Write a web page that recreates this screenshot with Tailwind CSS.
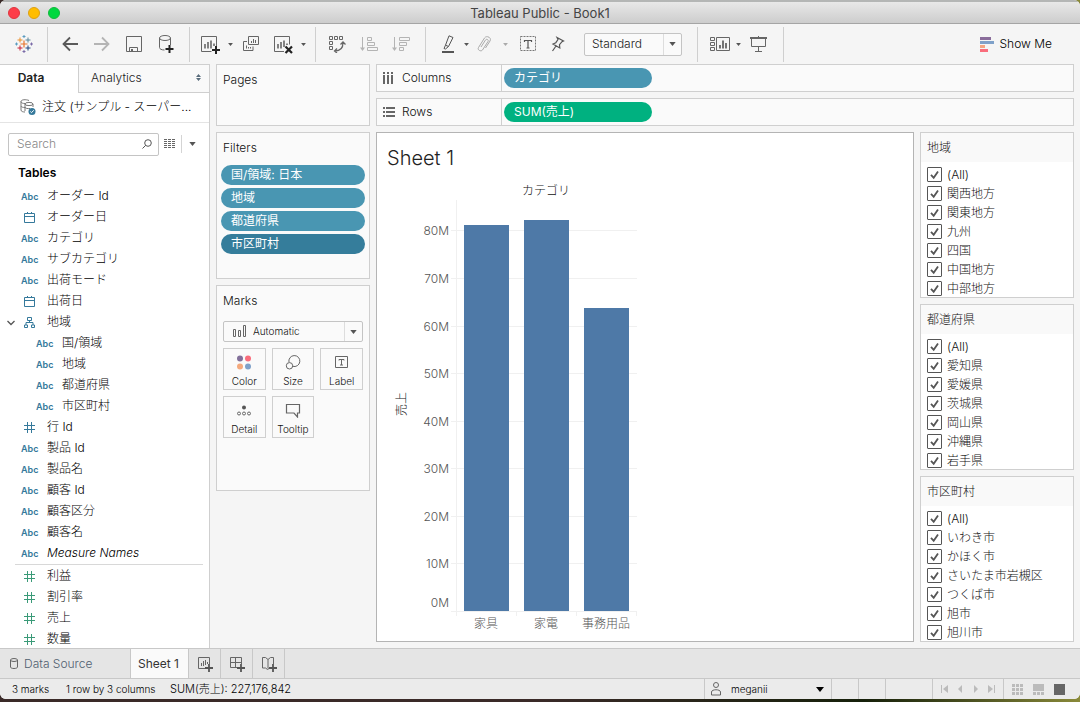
<!DOCTYPE html>
<html lang="ja">
<head>
<meta charset="utf-8">
<title>Tableau Public - Book1</title>
<script src="https://cdn.jsdelivr.net/npm/@tailwindcss/browser@4"></script>
</head>
<body class="h-screen overflow-hidden bg-[#3a2a28] font-['Inter','Noto_Sans_CJK_JP',sans-serif] text-xs font-light text-black">
<svg class="hidden">
  <symbol id="caret" viewBox="0 0 8 5"><path d="M0 0h8L4 5z" fill="currentColor"/></symbol>
  <symbol id="cal" viewBox="0 0 11 11"><path d="M.5 1.500h10v9H.5zM.5 4.500h10M3.500 0v2M7.500 0v2" fill="none" stroke="currentColor"/></symbol>
  <symbol id="hash" viewBox="0 0 11 11"><path d="M3.500 0v11M7.500 0v11M0 3.500h11M0 7.500h11" fill="none" stroke="currentColor"/></symbol>
  <symbol id="tree" viewBox="0 0 11 11"><path d="M3.500.5h4v3h-4zM.5 8h3v2.500h-3zM7.500 8h3v2.500h-3zM5.500 3.500v2M2 8V5.500h7V8" fill="none" stroke="currentColor"/></symbol>
  <symbol id="tick" viewBox="0 0 15 15"><path d="M4 7.800l2.700 3L11 4.500" fill="none" stroke="#555" stroke-width="1.800"/></symbol>
</svg>
<div class="flex h-screen flex-col bg-linear-to-r from-[#3a2a28] from-50% via-[#16200a] via-80% to-[#8a8a3a]">
<div class="mb-[3px] flex min-h-0 flex-1 flex-col overflow-hidden rounded-md bg-[#f5f5f5]">

<header class="flex h-6 shrink-0 items-center border-t-2 border-b border-t-[#b4b6b5] border-b-[#a5a5a5] bg-linear-to-b from-[#e8e8e8] to-[#cdcdcd] px-2">
  <div class="flex flex-1 gap-2">
    <button aria-label="Close" class="size-3 rounded-full border border-[#e0353f] bg-[#fd3d49]"></button>
    <button aria-label="Minimize" class="size-3 rounded-full border border-[#dea012] bg-[#ffbd00]"></button>
    <button aria-label="Zoom" class="size-3 rounded-full border border-[#12b93d] bg-[#00d840]"></button>
  </div>
  <h1 class="text-[13px] leading-5 font-normal text-[#444]">Tableau Public - Book1</h1>
  <div class="flex-1"></div>
</header>

<div class="flex h-10 shrink-0 items-center text-[#555] [&_button]:flex [&_button]:h-8 [&_button]:items-center [&_button]:justify-center [&>div]:flex [&>div]:h-[35px] [&>div]:items-center [&>div]:border-[#cfcfcf]">
  <div class="w-[47px] justify-center">
    <button aria-label="Start page"><svg class="size-[18px]" viewBox="0 0 18 18" fill="none"><path d="M9 5.500v7M5.500 9h7" stroke="#e8762c" stroke-width="1.200"/><path d="M5 2.500v5M2.500 5h5" stroke="#eb912c"/><path d="M13 2.500v5M10.500 5h5" stroke="#5b879b"/><path d="M5 10.500v5M2.500 13h5" stroke="#c72037"/><path d="M13 10.500v5M10.500 13h5" stroke="#1f447e"/><path d="M9 0v3M7.500 1.500h3M1.500 7.500v3M0 9h3" stroke="#5b9bbf"/><path d="M16.500 7.500v3M15 9h3M9 15v3M7.500 16.500h3" stroke="#7a6ba8"/></svg></button>
  </div>
  <div class="w-[142px] border-l pl-1.5 [&>button]:w-8">
    <button aria-label="Undo"><svg class="size-4" viewBox="0 0 16 16" fill="none" stroke="#5a5a5a" stroke-width="1.800"><path d="M16 8H1.500M8 1.500L1.500 8 8 14.500"/></svg></button>
    <button aria-label="Redo"><svg class="size-4" viewBox="0 0 16 16" fill="none" stroke="#b4b4b4" stroke-width="1.800"><path d="M0 8h14.500M8 1.500L14.500 8 8 14.500"/></svg></button>
    <button aria-label="Save"><svg class="size-4" viewBox="0 0 16 16" fill="none" stroke="#666"><path d="M.5.5h15v15H.5zM3.500 15.500v-4h8v4"/><path d="M5 13h2v3H5z" fill="#666" stroke="none"/></svg></button>
    <button aria-label="New data source"><svg class="h-[19px] w-4" viewBox="0 0 16 19" fill="none" stroke="#666"><ellipse cx="7" cy="3" rx="5.500" ry="2.500"/><path d="M1.500 3v9.500c0 1.500 2 2.500 5 2.500M12.500 3v7"/><path d="M11.500 10v8M7.500 14h8" stroke="#222" stroke-width="2"/></svg></button>
  </div>
  <div class="w-[126px] border-l pl-1">
    <button aria-label="New worksheet" class="w-8"><svg class="h-[19px] w-5" viewBox="0 0 20 19" fill="none" stroke="#666"><path d="M11.500 16.500H1.500v-15h15v10"/><path d="M5 13.500V9M8 13.500V7M11 13.500V5.500M14 11V8.500" stroke-width="1.600"/><path d="M16 11v8M12 15h8" stroke="#222" stroke-width="2"/></svg></button>
    <button aria-label="New menu" class="w-[9px]"><svg class="h-[3px] w-[5px]"><use href="#caret"/></svg></button>
    <button aria-label="Duplicate" class="w-8"><svg class="h-[18px] w-[18px]" viewBox="0 0 18 18" fill="none" stroke="#666"><path d="M6.500 1.500h10v8h-10zM5 6.500H1.500v9h9.500v-4"/><path d="M9.500 8V6M11.500 8V4M13.500 8V5M4.500 13.500v-3M6.500 13.500V12M8.500 13.500V12"/></svg></button>
    <button aria-label="Clear sheet" class="w-8"><svg class="h-[19px] w-5" viewBox="0 0 20 19" fill="none" stroke="#666"><path d="M11 16.500H1.500v-15h15v8"/><path d="M5 13.500V9M8 13.500V7M11 12V5.500M14 10V8.500" stroke-width="1.600"/><path d="M12.500 11.500l6.500 6.500M19 11.500L12.500 18" stroke="#222" stroke-width="2.200"/></svg></button>
    <button aria-label="Clear menu" class="w-[9px]"><svg class="h-[3px] w-[5px]"><use href="#caret"/></svg></button>
  </div>
  <div class="w-[110px] border-l pl-[5px] [&>button]:w-8">
    <button aria-label="Swap rows and columns"><svg class="h-[18px] w-[18px]" viewBox="0 0 18 18" fill="none" stroke="#666"><path d="M1.500 1.500h3v3h-3zM6.500 1.500h3v3h-3zM11.500 1.500h3v3h-3zM1.500 6.500h3v3h-3zM1.500 11.500h3v3h-3z"/><path d="M7 16c5 0 8-3 8-8.500M12.500 9.500L15 7l2.500 2.500M9 13.500L6.500 16 9 18" stroke-width="1.300"/></svg></button>
    <button aria-label="Sort ascending"><svg class="h-4 w-[18px]" viewBox="0 0 18 16" fill="none" stroke="#b4b4b4"><path d="M2.500 1v12M7.500 1.500h4v3h-4zM7.500 6.500h7v3h-7zM7.500 11.500h10v3h-10z"/><path d="M0 11.500h5l-2.500 3.500z" fill="#b4b4b4" stroke="none"/></svg></button>
    <button aria-label="Sort descending"><svg class="h-4 w-[18px]" viewBox="0 0 18 16" fill="none" stroke="#b4b4b4"><path d="M2.500 1v12M7.500 1.500h10v3h-10zM7.500 6.500h7v3h-7zM7.500 11.500h4v3h-4z"/><path d="M0 11.500h5l-2.500 3.500z" fill="#b4b4b4" stroke="none"/></svg></button>
  </div>
  <div class="w-[272px] border-l pl-2">
    <button aria-label="Highlight" class="w-7"><svg class="h-[18px] w-3" viewBox="0 0 12 18" fill="none" stroke="#555"><path d="M7 .8l4 1.700-4.500 9-3-1.300zM3.500 10.200L2 13.500l1.500.5 3-2.500"/><path d="M0 17h12" stroke-width="2"/></svg></button>
    <button aria-label="Highlight menu" class="w-2"><svg class="h-[3px] w-[5px]"><use href="#caret"/></svg></button>
    <button aria-label="Group members" class="w-7"><svg class="h-4 w-3.5" viewBox="0 0 14 16" fill="none" stroke="#aaa"><path d="M4 11l4.500-7c1-1.500 3.500-.3 2.500 1.500L5.500 14c-1.500 2-5.500 0-4-2.500L7.500 2c2-3 7.500-.5 5.500 3L8.500 12"/></svg></button>
    <button aria-label="Group menu" class="w-3.5 text-[#aaa]"><svg class="h-[3px] w-[5px]"><use href="#caret"/></svg></button>
    <button aria-label="Show mark labels" class="w-8"><svg class="h-4 w-[18px]" viewBox="0 0 18 16" fill="none" stroke="#777"><path d="M1.500.5h15v14h-15z" stroke-dasharray="2 1"/><path d="M5.500 6V4.500h7V6M9 4.500v7.500M7.500 12h3" stroke="#555" stroke-width="1.200"/></svg></button>
    <button aria-label="Fix axes" class="w-7"><svg class="h-4 w-3.5" viewBox="0 0 14 16" fill="none" stroke="#555" stroke-width="1.200"><path d="M6 1.500l6.500 3.500-1.500.7-2.500 3 .3 3.300L2 8l2.800-1.300L7 3.500zM5 10l-3.500 5"/></svg></button>
    <div class="relative ml-3 h-[23px] w-[98px]">
      <select aria-label="Fit" class="size-full appearance-none rounded-[2px] border border-[#c4c4c4] bg-[#fafafa] pl-[7px] text-[#222]"><option>Standard</option></select>
      <span class="pointer-events-none absolute inset-y-px right-px flex w-[18px] items-center justify-center border-l border-[#ddd]"><svg class="h-1 w-[7px]"><use href="#caret"/></svg></span>
    </div>
  </div>
  <div class="w-[87px] border-x pl-2">
    <button aria-label="Show cards" class="w-7"><svg class="h-4 w-[21px] shrink-0" viewBox="0 0 21 16" fill="none" stroke="#666"><path d="M.5 1.500h4v3h-4zM.5 6.500h4v3h-4zM.5 11.500h4v3h-4zM6.500 1.500h13v13h-13z"/><path d="M10 12.500V9M13 12.500V4.500M16 12.500V7" stroke-width="1.800"/></svg></button>
    <button aria-label="Card menu" class="w-2"><svg class="h-[3px] w-[5px]"><use href="#caret"/></svg></button>
    <button aria-label="Presentation mode" class="w-[33px]"><svg class="h-[17px] w-[17px]" viewBox="0 0 17 17" fill="none" stroke="#666"><path d="M0 2h17" stroke-width="2"/><path d="M1.500 2v8.500h14V2M8.500 0v2M8.500 11v4.500M5 15.500h7"/></svg></button>
  </div>
  <div class="ml-auto pr-7">
    <button class="gap-1.5 text-black"><svg class="h-[15px] w-3.5" viewBox="0 0 14 15"><path fill="#8a6d9b" d="M0 0h11v3H0z"/><path fill="#7fa1c9" d="M0 4h14v3H0z"/><path fill="#f4a582" d="M0 8h5v3H0z"/><path fill="#f96d7c" d="M0 12h8v3H0z"/></svg>Show Me</button>
  </div>
</div>

<main class="flex min-h-0 flex-1">
  <aside class="flex w-[210px] shrink-0 flex-col overflow-hidden border-t border-r border-[#cfcfcf] bg-white">
    <div class="flex h-7 shrink-0 text-[#222]">
      <button class="w-[78px] pr-4 pb-0.5 font-semibold">Data</button>
      <button class="flex flex-1 items-center justify-between border-b border-l border-[#cfcfcf] bg-[#f9f9f9] pr-2 pb-0.5 pl-3">Analytics
        <svg class="h-[7px] w-[5px]" viewBox="0 0 5 7" fill="#5a6d7c"><path d="M0 3l2.500-3L5 3zM0 4h5L2.500 7z"/></svg></button>
    </div>
    <button class="flex h-[30px] shrink-0 items-center gap-1.5 border-b border-[#e4e4e4] pb-0.5 pl-5 text-black">
      <svg class="h-4 w-4" viewBox="0 0 16 16" fill="none" stroke="#777"><path d="M9 1.500C6 .2 1 .5 1 2.500v8.500c0 1.500 2 2 4 2M1 2.500C1 4 3 4.500 5 4.500M1 7c0 1 2 1.500 4 1.500"/><ellipse cx="9" cy="5" rx="4" ry="1.600"/><path d="M5 5v7M13 5v3M5 8c0 1.500 3 1.800 5 1.500"/><circle cx="12" cy="12.500" r="3.500" fill="#35799b" stroke="none"/><path d="M10.300 12.500l1.200 1.200 2.200-2.400" stroke="#fff"/></svg>
      注文 (サンプル - スーパー...</button>
    <div class="flex h-[42px] shrink-0 items-center pl-2">
      <label class="flex h-[23px] w-[151px] items-center rounded-[2px] border border-[#c4c4c4] pr-1.5 pl-2">
        <input type="search" placeholder="Search" aria-label="Search" class="w-0 flex-1 outline-none placeholder:text-[#888]">
        <svg class="size-2.5" viewBox="0 0 10 10" fill="none" stroke="#555"><circle cx="6" cy="4" r="3.300"/><path d="M3.700 6.300L.5 9.500"/></svg>
      </label>
      <button aria-label="View data" class="ml-[5px]"><svg class="h-2.5 w-3" viewBox="0 0 12 10" stroke="#666"><path d="M0 .5h12M0 2.500h12M0 4.500h12M0 6.500h12M0 8.500h12" stroke-dasharray="3 1"/></svg></button>
      <button aria-label="Options" class="ml-[5px] flex h-[18px] w-[15px] items-center justify-end border-l border-[#d4d4d4] text-[#555]"><svg class="h-1 w-[7px]"><use href="#caret"/></svg></button>
    </div>
    <h2 class="h-[21px] shrink-0 pl-[18px] leading-[15px] font-semibold">Tables</h2>
    <div class="[&_li]:flex [&_li]:h-[21px] [&_li]:items-center [&_b]:w-[26px] [&_b]:text-[9px] [&_b]:font-semibold [&_b]:text-[#35799b] [&_svg]:mr-3 [&_svg]:ml-[3px] [&_svg]:size-[11px] [&_svg]:shrink-0">
    <ul class="pl-[21px] text-[#35799b] [&_span]:-mt-0.5 [&_span]:text-black">
      <li><b>Abc</b><span>オーダー Id</span></li>
      <li><svg><use href="#cal"/></svg><span>オーダー日</span></li>
      <li><b>Abc</b><span>カテゴリ</span></li>
      <li><b>Abc</b><span>サブカテゴリ</span></li>
      <li><b>Abc</b><span>出荷モード</span></li>
      <li><svg><use href="#cal"/></svg><span>出荷日</span></li>
      <li class="-ml-4"><button aria-label="Collapse" class="w-4"><svg viewBox="0 0 11 11" class="!ml-0" fill="none" stroke="#555" stroke-width="1.300"><path d="M2.500 4l3.500 3.500L9.500 4"/></svg></button><svg><use href="#tree"/></svg><span>地域</span></li>
      <li class="ml-[15px]"><b>Abc</b><span>国/領域</span></li>
      <li class="ml-[15px]"><b>Abc</b><span>地域</span></li>
      <li class="ml-[15px]"><b>Abc</b><span>都道府県</span></li>
      <li class="ml-[15px]"><b>Abc</b><span>市区町村</span></li>
      <li><svg><use href="#hash"/></svg><span>行 Id</span></li>
      <li><b>Abc</b><span>製品 Id</span></li>
      <li><b>Abc</b><span>製品名</span></li>
      <li><b>Abc</b><span>顧客 Id</span></li>
      <li><b>Abc</b><span>顧客区分</span></li>
      <li><b>Abc</b><span>顧客名</span></li>
      <li><b>Abc</b><span class="italic">Measure Names</span></li>
    </ul>
    <hr class="mr-1.5 mb-px ml-[15px] border-[#d8d8d8]">
    <ul class="pl-[21px] text-[#3a9a78] [&_span]:-mt-0.5 [&_span]:text-black">
      <li><svg><use href="#hash"/></svg><span>利益</span></li>
      <li><svg><use href="#hash"/></svg><span>割引率</span></li>
      <li><svg><use href="#hash"/></svg><span>売上</span></li>
      <li><svg><use href="#hash"/></svg><span>数量</span></li>
    </ul>
    </div>
  </aside>

  <section class="ml-1.5 flex w-[154px] shrink-0 flex-col gap-1.5 text-[#111] [&>div]:border [&>div]:border-[#cfcfcf] [&>div]:bg-[#fafafa] [&_h2]:pl-1.5 [&_h2]:leading-[30px]">
    <div class="h-[62px]"><h2>Pages</h2></div>
    <div class="h-[147px]"><h2>Filters</h2>
      <ul class="mt-0.5 flex flex-col gap-[3px] px-1 [&>li]:h-5 [&>li]:rounded-full [&>li]:bg-[#4996b2] [&>li]:pl-2.5 [&>li]:leading-5 [&>li]:font-normal [&>li]:text-white">
        <li>国/領域: 日本</li><li>地域</li><li>都道府県</li><li class="!bg-[#357d9b]">市区町村</li>
      </ul>
    </div>
    <div class="h-[206px] pr-1.5"><h2>Marks</h2>
      <div class="relative mt-[5px] ml-1.5 h-[21px]">
        <select aria-label="Mark type" class="size-full appearance-none rounded-[2px] border border-[#c4c4c4] pl-[29px] text-[10px]"><option>Automatic</option></select>
        <svg class="pointer-events-none absolute top-1 left-2.5 h-3 w-[14px]" viewBox="0 0 14 12" fill="none" stroke="#666"><path d="M.5 4.500h2v7h-2zM5.500 5.500h2v6h-2zM10.500.5h2v11h-2z"/></svg>
        <span class="pointer-events-none absolute inset-y-px right-px flex w-[18px] items-center justify-center border-l border-[#ddd] text-[#555]"><svg class="h-1 w-[7px]"><use href="#caret"/></svg></span>
      </div>
      <div class="mt-1.5 ml-1.5 grid grid-cols-3 gap-1.5 [&>button]:flex [&>button]:h-[42px] [&>button]:flex-col [&>button]:items-center [&>button]:justify-between [&>button]:border [&>button]:border-[#cfcfcf] [&>button]:pt-1.5 [&>button]:text-[10px] [&>button]:leading-4 [&_svg]:h-[15px] [&_svg]:w-4">
        <button><svg viewBox="0 0 16 15"><circle cx="4" cy="3.500" r="3" fill="#82709a"/><circle cx="12" cy="3.500" r="3" fill="#f96d7c"/><circle cx="4" cy="11.500" r="3" fill="#f4a97d"/><circle cx="12" cy="11.500" r="3" fill="#7fa1c9"/></svg>Color</button>
        <button><svg viewBox="0 0 16 15" fill="none" stroke="#666"><path d="M4 7.300a5.500 5.500 0 1 1 3.700 4"/><circle cx="4.500" cy="10.800" r="3.200"/></svg>Size</button>
        <button><svg viewBox="0 0 16 15" fill="none" stroke="#666"><path d="M1.500 1.500h12v11h-12z"/><path d="M5 5.500v-1h5v1M7.500 4.500V10M6 10h3"/></svg>Label</button>
        <button><svg viewBox="0 0 16 15" fill="none" stroke="#666"><circle cx="8" cy="4.500" r="2" fill="#555" stroke="none"/><circle cx="3" cy="10.500" r="1.500"/><circle cx="8" cy="10.500" r="1.500"/><circle cx="13" cy="10.500" r="1.500"/></svg>Detail</button>
        <button><svg viewBox="0 0 16 15" fill="none" stroke="#666" stroke-width="1.200"><path d="M1.500 1.500h13v8.500h-2v4L9 10H1.500z"/></svg>Tooltip</button>
      </div>
    </div>
  </section>

  <section class="mr-1.5 mb-1.5 ml-1.5 flex min-w-0 flex-1 flex-col gap-1.5 text-[#111]">
    <div class="flex h-7 shrink-0 border border-[#cfcfcf] bg-[#fafafa]">
      <div class="flex w-[125px] items-center gap-2 border-r border-[#cfcfcf] pl-1.5"><svg class="h-3 w-[11px]" viewBox="0 0 11 12" stroke="#666" stroke-width="2"><path d="M1 0v2M5 0v2M9 0v2M1 3v9M5 3v9M9 3v9"/></svg>Columns</div>
      <div class="m-0.5 mt-[3px] h-5 w-[148px] rounded-full bg-[#4996b2] pl-2.5 leading-[19px] font-normal text-white">カテゴリ</div>
    </div>
    <div class="flex h-7 shrink-0 border border-[#cfcfcf] bg-[#fafafa]">
      <div class="flex w-[125px] items-center gap-[7px] border-r border-[#cfcfcf] pl-1.5"><svg class="h-2.5 w-3" viewBox="0 0 12 10" stroke="#666" stroke-width="2"><path d="M0 1h2M0 5h2M0 9h2M3 1h9M3 5h9M3 9h9"/></svg>Rows</div>
      <div class="m-0.5 mt-[3px] h-5 w-[148px] rounded-full bg-[#00b180] pl-2.5 leading-[19px] font-normal text-white">SUM(売上)</div>
    </div>

    <div class="flex min-h-0 flex-1 gap-1.5">
      <div class="min-w-0 flex-1 overflow-hidden border border-[#b4b4b4] bg-white">
        <h2 class="mt-2 ml-2.5 h-8 text-xl leading-[34px] text-[#222]">Sheet 1</h2>
        <svg class="h-[468px] w-[270px]" viewBox="0 0 270 468" font-size="12" fill="#555" role="img" aria-label="カテゴリ別の売上">
          <text x="169" y="22" text-anchor="middle" fill="#111">カテゴリ</text>
          <path d="M79.500 27v416M74 57.500h186M74 105.500h186M74 153.500h186M74 200.500h186M74 248.500h186M74 295.500h186M74 343.500h186M74 390.500h186M74 438.500h186M139.500 438v5M199.500 438v5M259.500 438v5" stroke="#f0f0f0"/>
          <g fill="#4e79a7"><path d="M87 52h45v386H87z"/><path d="M147 47h45v391h-45z"/><path d="M207 135h45v303h-45z"/></g>
          <g text-anchor="end"><text x="72" y="62">80M</text><text x="72" y="110">70M</text><text x="72" y="158">60M</text><text x="72" y="205">50M</text><text x="72" y="253">40M</text><text x="72" y="300">30M</text><text x="72" y="348">20M</text><text x="72" y="395">10M</text><text x="72" y="434">0M</text></g>
          <g text-anchor="middle"><text x="109" y="455">家具</text><text x="169" y="455">家電</text><text x="229" y="455">事務用品</text></g>
          <text transform="translate(29 231) rotate(-90)" text-anchor="middle" fill="#111">売上</text>
        </svg>
      </div>

      <div class="flex w-[154px] shrink-0 flex-col gap-1.5 [&>fieldset]:min-h-0 [&>fieldset]:flex-1 [&>fieldset]:overflow-hidden [&>fieldset]:border [&>fieldset]:border-[#cfcfcf] [&>fieldset]:bg-white [&_h3]:mb-[3px] [&_h3]:h-[29px] [&_h3]:bg-[#f9f9f9] [&_h3]:pl-1.5 [&_h3]:leading-[30px] [&_label]:flex [&_label]:h-[19px] [&_label]:items-center [&_label]:gap-[5px] [&_label]:pl-1.5 [&_label>span]:grid [&_label>span>*]:col-start-1 [&_label>span>*]:row-start-1 [&_label>span>*]:size-[15px] [&_input]:appearance-none [&_input]:rounded-[1px] [&_input]:border [&_input]:border-[#555] [&_svg]:pointer-events-none [&_svg]:invisible [&_input:checked+svg]:visible">
        <fieldset aria-label="地域"><h3>地域</h3>
          <label><span><input type="checkbox" checked><svg><use href="#tick"/></svg></span>(All)</label>
          <label><span><input type="checkbox" checked><svg><use href="#tick"/></svg></span>関西地方</label>
          <label><span><input type="checkbox" checked><svg><use href="#tick"/></svg></span>関東地方</label>
          <label><span><input type="checkbox" checked><svg><use href="#tick"/></svg></span>九州</label>
          <label><span><input type="checkbox" checked><svg><use href="#tick"/></svg></span>四国</label>
          <label><span><input type="checkbox" checked><svg><use href="#tick"/></svg></span>中国地方</label>
          <label><span><input type="checkbox" checked><svg><use href="#tick"/></svg></span>中部地方</label>
        </fieldset>
        <fieldset aria-label="都道府県"><h3>都道府県</h3>
          <label><span><input type="checkbox" checked><svg><use href="#tick"/></svg></span>(All)</label>
          <label><span><input type="checkbox" checked><svg><use href="#tick"/></svg></span>愛知県</label>
          <label><span><input type="checkbox" checked><svg><use href="#tick"/></svg></span>愛媛県</label>
          <label><span><input type="checkbox" checked><svg><use href="#tick"/></svg></span>茨城県</label>
          <label><span><input type="checkbox" checked><svg><use href="#tick"/></svg></span>岡山県</label>
          <label><span><input type="checkbox" checked><svg><use href="#tick"/></svg></span>沖縄県</label>
          <label><span><input type="checkbox" checked><svg><use href="#tick"/></svg></span>岩手県</label>
        </fieldset>
        <fieldset aria-label="市区町村"><h3>市区町村</h3>
          <label><span><input type="checkbox" checked><svg><use href="#tick"/></svg></span>(All)</label>
          <label><span><input type="checkbox" checked><svg><use href="#tick"/></svg></span>いわき市</label>
          <label><span><input type="checkbox" checked><svg><use href="#tick"/></svg></span>かほく市</label>
          <label><span><input type="checkbox" checked><svg><use href="#tick"/></svg></span>さいたま市岩槻区</label>
          <label><span><input type="checkbox" checked><svg><use href="#tick"/></svg></span>つくば市</label>
          <label><span><input type="checkbox" checked><svg><use href="#tick"/></svg></span>旭市</label>
          <label><span><input type="checkbox" checked><svg><use href="#tick"/></svg></span>旭川市</label>
        </fieldset>
      </div>
    </div>
  </section>
</main>

<nav class="flex h-[30px] shrink-0 border-t border-[#c8c8c8] bg-[#e5e5e5] [&>button]:flex [&>button]:items-center [&>button]:justify-center [&>button]:border-r [&>button]:border-[#c8c8c8]">
  <button class="w-[131px] !justify-start gap-1.5 pl-2.5 text-[#506070]"><svg class="h-[11px] w-2" viewBox="0 0 8 11" fill="none" stroke="#666"><ellipse cx="4" cy="2" rx="3.500" ry="1.500"/><path d="M.5 2v7c0 2 7 2 7 0V2"/></svg>Data Source</button>
  <button class="w-[58px] bg-[#fafafa] pr-0.5 font-normal text-[#333]">Sheet 1</button>
  <button aria-label="New worksheet" class="w-8"><svg class="size-4" viewBox="0 0 16 16" fill="none" stroke="#666"><path d="M8 12.500H1.500v-11h11V8"/><path d="M4.500 10V7M6.500 10V5M8.500 9V4M10.500 8V6"/><path d="M12 8v8M8 12h8" stroke="#555" stroke-width="1.800"/></svg></button>
  <button aria-label="New dashboard" class="w-8"><svg class="size-4" viewBox="0 0 16 16" fill="none" stroke="#666"><path d="M8 11.500H1.500v-10h11V8M6.500 1.500v10M1.500 6.500h11"/><path d="M12 8v8M8 12h8" stroke="#555" stroke-width="1.800"/></svg></button>
  <button aria-label="New story" class="w-8"><svg class="size-4" viewBox="0 0 16 16" fill="none" stroke="#666"><path d="M8 12.500L6.500 13.500 4.500 12H1.500V1.500h3l2.500 2 2.500-2h3V8M7 3.500v9"/><path d="M12 8v8M8 12h8" stroke="#555" stroke-width="1.800"/></svg></button>
</nav>
<footer class="flex h-[21px] shrink-0 items-stretch border-t border-[#c8c8c8] bg-[#ebebeb] pl-3 text-[10px] leading-5 text-black [&>div]:border-l [&>div]:border-[#c8c8c8]">
  <span class="w-[54px]">3 marks</span><span class="w-[104px]">1 row by 3 columns</span><span class="mr-auto text-[11px]">SUM(売上): 227,176,842</span>
  <div class="w-[127px]"><button class="flex h-full w-full items-center pr-[7px] pl-1.5"><svg class="mr-2.5 h-[14px] w-2.5" viewBox="0 0 10 14" fill="none" stroke="#666"><circle cx="5" cy="3" r="2.500"/><path d="M.5 13V10c0-3 9-3 9 0v3z"/></svg>meganii<svg class="ml-auto h-[5px] w-2"><use href="#caret"/></svg></button></div>
  <div class="w-[27px]"></div><div class="w-[27px]"></div><div class="w-[47px]"></div>
  <div class="flex w-[71px] items-center justify-between px-2 text-[#bbb] [&_svg]:h-2 [&_svg]:w-[7px]">
    <button aria-label="First sheet"><svg viewBox="0 0 7 8" fill="currentColor"><path d="M0 0h1v8H0zM7 0v8L2 4z"/></svg></button>
    <button aria-label="Previous sheet"><svg viewBox="0 0 7 8" fill="currentColor"><path d="M5 0v8L1 4z"/></svg></button>
    <button aria-label="Next sheet"><svg viewBox="0 0 7 8" fill="currentColor"><path d="M2 0v8l4-4z"/></svg></button>
    <button aria-label="Last sheet"><svg viewBox="0 0 7 8" fill="currentColor"><path d="M6 0h1v8H6zM0 0v8l5-4z"/></svg></button>
  </div>
  <div class="flex w-[77px] items-center gap-2.5 pl-2 [&_svg]:size-[11px]">
    <button aria-label="Sheet sorter"><svg viewBox="0 0 11 11" stroke="#bbb" stroke-width="3" stroke-dasharray="3 1"><path d="M0 1.500h11M0 5.500h11M0 9.500h11"/></svg></button>
    <button aria-label="Filmstrip"><svg viewBox="0 0 11 11" fill="#bbb"><path d="M0 0h11v7H0zM0 8h3v3H0zM4 8h3v3H4zM8 8h3v3H8z"/></svg></button>
    <button aria-label="Tabs view"><svg viewBox="0 0 11 11"><path fill="#666" d="M0 0h11v11H0z"/></svg></button>
  </div>
</footer>
</div>
</div>
</body>
</html>
